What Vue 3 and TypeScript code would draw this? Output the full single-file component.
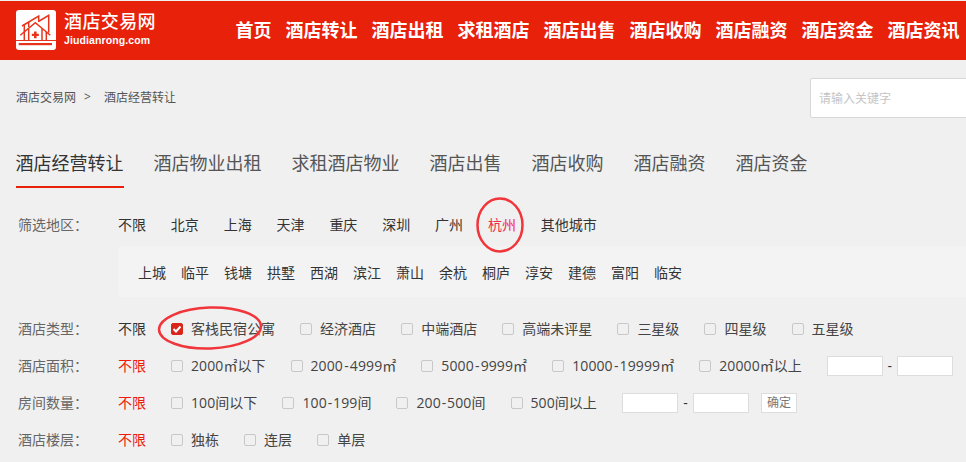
<script setup lang="ts">
const nav: string[] = ['首页', '酒店转让', '酒店出租', '求租酒店', '酒店出售', '酒店收购', '酒店融资', '酒店资金', '酒店资讯']
const tabs: string[] = ['酒店经营转让', '酒店物业出租', '求租酒店物业', '酒店出售', '酒店收购', '酒店融资', '酒店资金']
const cities: string[] = ['不限', '北京', '上海', '天津', '重庆', '深圳', '广州', '杭州', '其他城市']
const districts: string[] = ['上城', '临平', '钱塘', '拱墅', '西湖', '滨江', '萧山', '余杭', '桐庐', '淳安', '建德', '富阳', '临安']
const types: string[] = ['客栈民宿公寓', '经济酒店', '中端酒店', '高端未评星', '三星级', '四星级', '五星级']
const areas: string[] = ['2000㎡以下', '2000-4999㎡', '5000-9999㎡', '10000-19999㎡', '20000㎡以上']
const rooms: string[] = ['100间以下', '100-199间', '200-500间', '500间以上']
const floors: string[] = ['独栋', '连层', '单层']

// Splits a label into digit runs, dashes and plain text so numbers can be spaced apart.
function tokens(text: string): { s: string; c: string }[] {
  return (text.match(/\d+|-|[^\d-]+/g) ?? []).map((s) => ({
    s,
    c: s === '-' ? 'dash' : /\d/.test(s) ? 'num' : '',
  }))
}
</script>

<template>
  <div class="page">
    <header class="header">
      <div class="brand">
        <svg class="logo" viewBox="0 0 40 40" width="40" height="40">
          <rect width="40" height="40" rx="3" fill="#fff" />
          <g fill="none" stroke="#e8331c" stroke-width="1.500">
            <path d="M6 16 L22.700 6 V12 M23.300 11 L32.700 5.300 V22.700" />
            <path d="M8.300 22 V14 M12.700 17 V12" />
            <path d="M4.300 25.300 L19.300 12.700 L34.300 25.300" />
            <path d="M8.300 22 V30 M12.700 19 V30 M26 19 V30 M30.300 22 V30" />
          </g>
          <path d="M18 21.500 h2.600 v2.200 h2.200 v2.400 h-2.200 v2.200 h-2.600 v-2.200 h-2.200 v-2.400 h2.200 Z" fill="#e8331c" />
          <rect x="0" y="30" width="40" height="1" fill="#e8331c" />
          <rect x="2.700" y="33" width="33.300" height="2.200" fill="#e8331c" />
        </svg>
        <div class="brand-text">
          <div class="brand-name">酒店交易网</div>
          <div class="brand-url">Jiudianrong.com</div>
        </div>
      </div>
      <nav class="nav">
        <a v-for="n in nav" :key="n" class="nav-item">{{ n }}</a>
      </nav>
    </header>

    <div class="crumb-row">
      <div class="crumbs"><span>酒店交易网</span><span class="sep">&gt;</span><span>酒店经营转让</span></div>
      <div class="search">请输入关键字</div>
    </div>

    <div class="tabs">
      <a v-for="(t, i) in tabs" :key="t" class="tab" :class="{ active: i === 0 }">{{ t }}</a>
    </div>

    <section class="filters">
      <div class="row city-row">
        <span class="label">筛选地区：</span>
        <span v-for="c in cities" :key="c" class="city" :class="{ pink: c === '杭州' }">{{ c }}</span>
      </div>
      <div class="panel">
        <span v-for="d in districts" :key="d" class="district">{{ d }}</span>
      </div>
      <div class="row type-row">
        <span class="label">酒店类型：</span>
        <span class="any">不限</span>
        <label v-for="(t, i) in types" :key="t" class="check">
          <i class="box" :class="{ on: i === 0 }">
            <svg v-if="i === 0" viewBox="0 0 12 12" width="12" height="12"><path d="M2.500 6 L5 8.500 L9.500 3.500" fill="none" stroke="#fff" stroke-width="2" /></svg>
          </i><span class="txt">{{ t }}</span>
        </label>
      </div>
      <div class="row area-row">
        <span class="label">酒店面积：</span>
        <span class="any red">不限</span>
        <label v-for="t in areas" :key="t" class="check"><i class="box"></i><span class="txt"><span v-for="(p, j) in tokens(t)" :key="j" :class="p.c">{{ p.s }}</span></span></label>
        <span class="range"><i class="field"></i><b>-</b><i class="field"></i></span>
      </div>
      <div class="row room-row">
        <span class="label">房间数量：</span>
        <span class="any red">不限</span>
        <label v-for="t in rooms" :key="t" class="check"><i class="box"></i><span class="txt"><span v-for="(p, j) in tokens(t)" :key="j" :class="p.c">{{ p.s }}</span></span></label>
        <span class="range"><i class="field"></i><b>-</b><i class="field"></i></span>
        <button class="ok">确定</button>
      </div>
      <div class="row">
        <span class="label">酒店楼层：</span>
        <span class="any red">不限</span>
        <label v-for="t in floors" :key="t" class="check"><i class="box"></i><span class="txt">{{ t }}</span></label>
      </div>
    </section>

    <svg class="ring ring-city" viewBox="0 0 50 60" width="50" height="60"><ellipse cx="25" cy="30" rx="22.500" ry="26.500" fill="none" stroke="#f0353b" stroke-width="2.500" /></svg>
    <svg class="ring ring-type" viewBox="0 0 108 50" width="108" height="50"><ellipse cx="54" cy="25" rx="51" ry="20.500" fill="none" stroke="#f0353b" stroke-width="2.500" transform="rotate(-2 54 25)" /></svg>
  </div>
</template>

<style>
html, body { margin: 0; background: #f0f0f0; overflow: hidden; }
</style>

<style scoped>
.page {
  position: relative;
  width: 966px;
  height: 462px;
  overflow: hidden;
  background: #f0f0f0;
  font-family: "Open Sans", "Noto Sans CJK SC", sans-serif;
  font-size: 14px;
  color: #333;
}
.header {
  margin-top: 1px;
  height: 59px;
  background: #e8210b;
  display: flex;
  align-items: center;
  color: #fff;
  box-sizing: border-box;
  padding: 0 0 2px 16px;
}
.brand { display: flex; align-items: center; width: 219.500px; flex: none; }
.logo { display: block; margin-right: 8px; }
.brand-name { font-size: 18px; line-height: 22px; letter-spacing: 0.400px; font-weight: 500; margin-top: -2px; }
.brand-url { font-size: 10.500px; line-height: 14px; font-weight: 700; letter-spacing: 0.100px; font-family: "Liberation Sans", sans-serif; margin-top: 1px; }
.nav { display: flex; gap: 14px; }
.nav-item { font-size: 18px; font-weight: 700; line-height: 24px; white-space: nowrap; }
.crumb-row { display: flex; justify-content: space-between; align-items: center; height: 40px; margin-top: 18px; padding-left: 16px; }
.crumbs { font-size: 12px; color: #555; display: flex; padding-bottom: 3px; }
.sep { margin: 0 13px 0 8px; }
.search {
  width: 170px;
  height: 40px;
  box-sizing: border-box;
  margin-right: -14px;
  padding-left: 8px;
  border: 1px solid #d8d8d8;
  border-radius: 2px;
  background: #fff;
  color: #c4c4c4;
  font-size: 12px;
  line-height: 40px;
}
.tabs { display: flex; gap: 30px; margin-top: 26px; padding-left: 15.500px; height: 44px; }
.tab { font-size: 18px; line-height: 38px; height: 44px; box-sizing: border-box; color: #555; }
.tab.active { color: #333; border-bottom: 2px solid #e8210b; height: 44px; }
.filters { margin-top: 21px; }
.row { display: flex; align-items: center; height: 37px; padding-left: 18px; white-space: nowrap; }
.label { width: 100px; font-size: 14px; color: #666; flex: none; padding-bottom: 2px; }
.city-row { height: 30px; }
.city-row .label { padding-bottom: 0; }
.city { margin-right: 24.850px; }
.pink { color: #f0284a; }
.panel { display: flex; gap: 15px; align-items: center; height: 51px; margin: 7px 0 13px 118px; padding-left: 20px; background: #f3f3f3; border-radius: 4px 0 0 4px; }
.any { width: 53px; flex: none; padding-bottom: 2px; }
.red { color: #f01a0a; }
.check { display: inline-flex; align-items: center; margin-right: 25.100px; color: #444; }
.txt { padding-bottom: 2px; }
.num { letter-spacing: 0.100px; }
.dash { margin: 0 0.900px; }
.area-row .dash { margin: 0 1.200px; }
.box { width: 12px; height: 12px; box-sizing: border-box; border: 1px solid #c8c8c8; border-radius: 2px; margin-right: 8px; flex: none; display: block; }
.box.on { background: #d8261a; border-color: #d8261a; }
.box.on svg { display: block; margin: -1px; }
.range { display: inline-flex; align-items: center; margin-right: 12px; }
.range b { font-weight: 400; width: 14px; text-align: center; }
.room-row .range b { width: 15px; }
.field { display: block; width: 56px; height: 20px; box-sizing: border-box; background: #fff; border: 1px solid #ddd; }
.ok { width: 36px; height: 20px; box-sizing: border-box; padding: 0; font: inherit; font-size: 12px; line-height: 17px; color: #777; background: #fff; border: 1px solid #ddd; }
.ring { position: absolute; pointer-events: none; }
.ring-city { left: 474.500px; top: 194.500px; }
.ring-type { left: 156px; top: 303px; }
</style>
